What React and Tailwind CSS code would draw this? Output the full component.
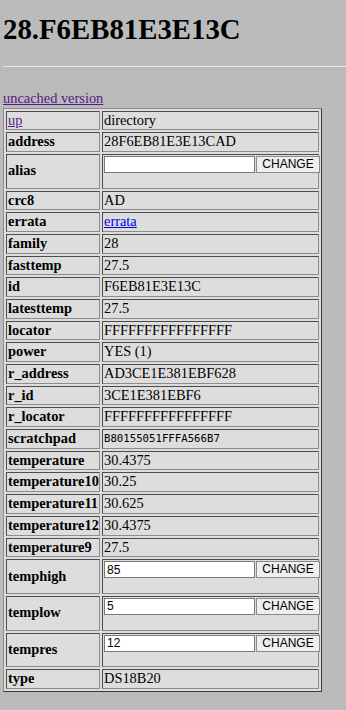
import React from "react";

const rows = [
  { key: "up", link: "up", value: "directory" },
  { key: "address", value: "28F6EB81E3E13CAD" },
  { key: "alias", input: "" },
  { key: "crc8", value: "AD" },
  { key: "errata", valueLink: "errata" },
  { key: "family", value: "28" },
  { key: "fasttemp", value: "27.5" },
  { key: "id", value: "F6EB81E3E13C" },
  { key: "latesttemp", value: "27.5" },
  { key: "locator", value: "FFFFFFFFFFFFFFFF" },
  { key: "power", value: "YES (1)" },
  { key: "r_address", value: "AD3CE1E381EBF628" },
  { key: "r_id", value: "3CE1E381EBF6" },
  { key: "r_locator", value: "FFFFFFFFFFFFFFFF" },
  { key: "scratchpad", value: "B80155051FFFA566B7", mono: true },
  { key: "temperature", value: "30.4375" },
  { key: "temperature10", value: "30.25" },
  { key: "temperature11", value: "30.625" },
  { key: "temperature12", value: "30.4375" },
  { key: "temperature9", value: "27.5" },
  { key: "temphigh", input: "85" },
  { key: "templow", input: "5" },
  { key: "tempres", input: "12" },
  { key: "type", value: "DS18B20" },
];

// inset-style cell frame, like a classic border=1 table cell
const cell =
  "border border-solid border-t-[#4d4d4d] border-l-[#4d4d4d] border-b-[#8c8c8c] border-r-[#8c8c8c] p-px";

function ChangeForm({ value }) {
  return (
    <form className="flex items-start" onSubmit={(e) => e.preventDefault()}>
      <input
        type="text"
        defaultValue={value}
        className="w-[151px] h-[17px] bg-white border border-solid border-[#7a7a7a] px-[2px] text-[12px] leading-[15px] text-black font-['Liberation_Sans',Arial,sans-serif] outline-none"
      />
      <button
        type="submit"
        className="w-[64px] h-[17px] bg-[#efefef] border border-solid border-[#8a8a8a] text-[12px] leading-[15px] text-black font-['Liberation_Sans',Arial,sans-serif] ml-px"
      >
        CHANGE
      </button>
    </form>
  );
}

export default function App() {
  return (
    <div className="min-h-screen bg-[#bbbbbb] text-black font-['Liberation_Serif','Times_New_Roman',serif] pl-[3px] pt-[13px] pb-4">
      <h1 className="text-[28.8px] font-bold leading-[33px]">28.F6EB81E3E13C</h1>
      <div className="mt-[20px] h-px bg-[#e8e8e8]" />
      <div className="mt-[23px] text-[14.4px] leading-[16.5px]">
        <a href="#" className="text-[#551a8b] underline">
          uncached version
        </a>
      </div>
      <div className="mt-px w-[319px] grid grid-cols-[94px_217px] gap-[2px] p-[2px] bg-[#dddddd] border border-solid border-t-[#8c8c8c] border-l-[#8c8c8c] border-b-[#3a3a3a] border-r-[#3a3a3a] text-[14.4px] leading-[15.7px]">
        {rows.map((r) => {
          const h = r.input !== undefined ? "h-[34.67px]" : "h-[19.7px]";
          return (
            <React.Fragment key={r.key}>
              <div className={`${cell} ${h} flex items-center whitespace-nowrap`}>
                {r.link ? (
                  <a href="#" className="text-[#551a8b] underline">
                    {r.link}
                  </a>
                ) : (
                  <b>{r.key}</b>
                )}
              </div>
              <div className={`${cell} ${h} flex ${r.input !== undefined ? "items-start" : "items-center"} whitespace-nowrap`}>
                {r.input !== undefined ? (
                  <ChangeForm value={r.input} />
                ) : r.valueLink ? (
                  <a href="#" className="text-[#0000ee] underline">
                    {r.valueLink}
                  </a>
                ) : r.mono ? (
                  <span className="font-['DejaVu_Sans_Mono',monospace] text-[10.7px]">{r.value}</span>
                ) : (
                  <span>{r.value}</span>
                )}
              </div>
            </React.Fragment>
          );
        })}
      </div>
    </div>
  );
}
